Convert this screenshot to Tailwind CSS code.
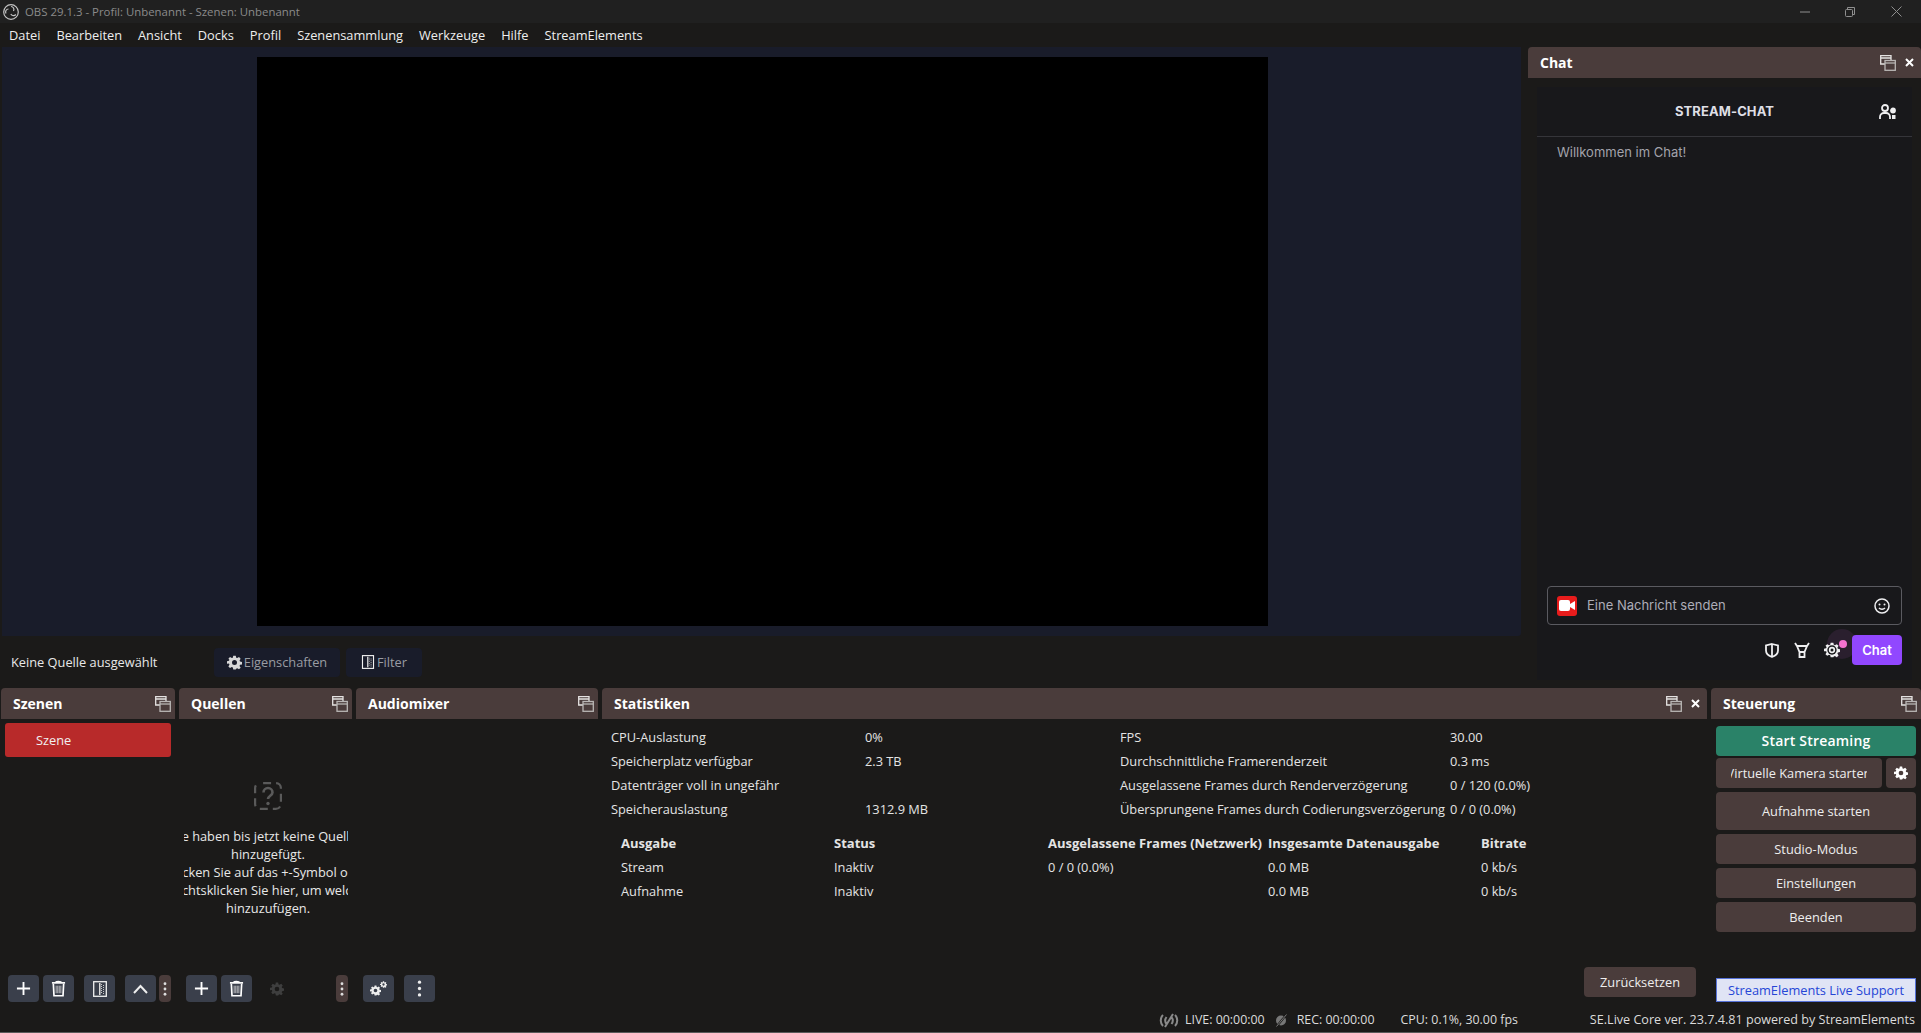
<!DOCTYPE html>
<html><head><meta charset="utf-8"><script src="https://cdn.jsdelivr.net/npm/@tailwindcss/browser@4"></script></head>
<body class="m-0 overflow-hidden bg-[#1b1a19]">
<svg width="0" height="0" class="absolute">
<defs>
<symbol id="float" viewBox="0 0 16 16"><path d="M5 9H.7V.7h10.300V5M.7 3H11" fill="none" stroke="#e4e2e1" stroke-width="1.300"/><rect x="5" y="5.500" width="10.300" height="9.800" fill="none" stroke="#b9b6b5" stroke-width="1.300"/><path d="M5 8h10.300" stroke="#b9b6b5" stroke-width="1.300"/></symbol>
<symbol id="plus" viewBox="0 0 16 16"><path d="M8 1v14M1 8h14" stroke="#fff" stroke-width="2"/></symbol>
<symbol id="trash" viewBox="0 0 16 18"><path d="M1 3h14" stroke="#fff" stroke-width="1.800"/><path d="M5 2.500C5 1 11 1 11 2.500" fill="none" stroke="#fff" stroke-width="1.400"/><path d="M2.500 4l.7 12.700h9.600l.7-12.700" fill="none" stroke="#fff" stroke-width="1.800"/><path d="M5.500 6v8M7.200 6v8M8.800 6v8M10.500 6v8" stroke="#e0e0e0" stroke-width=".8"/></symbol>
<symbol id="filter" viewBox="0 0 14 16"><rect x=".7" y=".7" width="12.600" height="14.600" fill="none" stroke="#f0f0f0" stroke-width="1.300"/><rect x="6" y="2" width="1.500" height="12" fill="#ddd"/><path d="M8 3h1v1H8zM10 4h1v1h-1zM8 5h1v1H8zM10 6h1v1h-1zM8 7h1v1H8zM10 8h1v1h-1zM8 9h1v1H8zM10 10h1v1h-1zM8 11h1v1H8zM10 12h1v1h-1z" fill="#c8c8c8"/></symbol>
<symbol id="gear" viewBox="0 0 24 24"><path fill-rule="evenodd" d="M10 1h4l.7 3.200 1.700.7L19.200 3.200l2.600 2.600-1.700 2.800.7 1.700 3.200.7v4l-3.200.7-.7 1.700 1.700 2.800-2.600 2.600-2.800-1.700-1.700.7L14 23h-4l-.7-3.200-1.700-.7-2.800 1.700-2.600-2.600 1.700-2.800-.7-1.700L0 14v-4l3.200-.7.7-1.700L2.200 5.800l2.600-2.600 2.800 1.700 1.700-.7zM12 8a4 4 0 100 8 4 4 0 000-8z"/></symbol>
<symbol id="kebab" viewBox="0 0 4 16"><circle cx="2" cy="2" r="1.600"/><circle cx="2" cy="8" r="1.600"/><circle cx="2" cy="14" r="1.600"/></symbol>
</defs>
</svg>
<div class="w-[1921px] h-[1033px] flex flex-col overflow-hidden text-[12.8px] leading-[18px] text-[#e8e8e8] font-['Open_Sans',sans-serif]">
<!-- title -->
<div class="h-[23px] shrink-0 bg-[#202020] flex items-center relative">
<svg class="ml-[3px] w-[16px] h-[16px]" viewBox="0 0 16 16" fill="none" stroke="#c4c4c4" stroke-width="1.200"><circle cx="8" cy="8" r="7.300"/><path d="M8 2.500a3 3 0 012.500 4.500M12.800 10.500a3 3 0 01-5-.5M3 9.500a3 3 0 012.500-4.500"/></svg>
<span class="ml-[6px] text-[11.4px] text-[#8b8b8b]">OBS 29.1.3 - Profil: Unbenannt - Szenen: Unbenannt</span>
<div class="ml-auto flex items-center text-[#8f8f8f] mr-[19px]">
<svg class="w-[10px] h-[10px] mr-[35px]" viewBox="0 0 10 10"><path d="M0 5h10" stroke="#8f8f8f"/></svg>
<svg class="w-[10px] h-[10px] mr-[36px]" viewBox="0 0 10 10" fill="none" stroke="#8f8f8f"><rect x=".5" y="2.500" width="7" height="7" rx="1"/><path d="M2.500 2.500V.5h7v7H7.500"/></svg>
<svg class="w-[11px] h-[11px]" viewBox="0 0 11 11"><path d="M.5.5l10 10M10.500.5l-10 10" stroke="#8f8f8f"/></svg>
</div></div>
<!-- menu -->
<div class="h-[24px] shrink-0 bg-[#1b1a19] flex items-center pl-[9px] gap-[16px] text-[#eee]">
<span>Datei</span><span>Bearbeiten</span><span>Ansicht</span><span>Docks</span><span>Profil</span><span>Szenensammlung</span><span>Werkzeuge</span><span>Hilfe</span><span>StreamElements</span>
</div>
<!-- main -->
<div class="h-[641px] shrink-0 flex">
<div class="w-[1528px] shrink-0 flex flex-col">
<div class="ml-[2px] w-[1519px] h-[589px] pl-[2px] bg-[#191c2a] flex items-center justify-center rounded-br-[3px]">
<div class="w-[1011px] h-[569px] bg-black"></div>
</div>
<div class="h-[52px] flex items-center">
<span class="ml-[11px] w-[203px]">Keine Quelle ausgewählt</span>
<div class="w-[126px] h-[29px] rounded-[4px] bg-[#191c2a] text-[#9a9ca3] flex items-center justify-center gap-[2px]"><svg class="w-[15px] h-[15px] fill-[#d8d8d8]"><use href="#gear"/></svg>Eigenschaften</div>
<div class="ml-[6px] w-[76px] h-[29px] rounded-[4px] bg-[#191c2a] text-[#9a9ca3] flex items-center justify-center gap-[2px]"><svg class="w-[14px] h-[14px]"><use href="#filter"/></svg>Filter</div>
</div>
</div>
<div class="flex-1 flex flex-col">
<div class="h-[31px] shrink-0 bg-[#4a3c3b] rounded-t-[4px] flex items-center pl-[12px] text-[14px] font-bold text-white">Chat
<svg class="ml-auto w-[16px] h-[16px]"><use href="#float"/></svg>
<svg class="ml-[9px] mr-[7px] w-[9px] h-[9px]" viewBox="0 0 9 9"><path d="M1 1l7 7M8 1l-7 7" stroke="#fff" stroke-width="2"/></svg>
</div>
<div class="mx-[9px] mt-[9px] mb-[8px] flex-1 bg-[#18181b] flex flex-col font-['Inter',sans-serif]">
<div class="h-[50px] shrink-0 border-b border-[#35353a] flex items-center relative pb-[2px]">
<span class="w-full text-center font-bold text-[13px] text-[#dfdfe6] tracking-[.1px]">STREAM-CHAT</span>
<svg class="absolute right-[16px] top-[17px] w-[17px] h-[16px]" viewBox="0 0 17 16" fill="none" stroke="#efeff1" stroke-width="1.800"><circle cx="6" cy="4" r="3"/><path d="M1 15v-2a4 4 0 014-4h2a4 4 0 014 4v2"/><circle cx="14" cy="6.500" r="2" fill="#efeff1"/><path d="M13 11h3.500v4H13z" fill="#efeff1" stroke="none"/></svg>
</div>
<div class="pl-[20px] pt-[6px] text-[13px] text-[#a3a3ab]">Willkommen im Chat!</div>
<div class="mt-auto ml-[10px] w-[355px] h-[39px] border border-[#5a5a60] rounded-[4px] flex items-center">
<div class="ml-[9px] w-[20px] h-[20px] bg-[#e81c1c] rounded-[3px] flex items-center justify-center"><svg class="w-[16px] h-[11px]" viewBox="0 0 16 11" fill="#fff"><rect width="11" height="11" rx="2"/><path d="M11 4l5-3v9l-5-3z"/></svg></div>
<span class="ml-[10px] pb-[1px] text-[13px] text-[#adadb8]">Eine Nachricht senden</span>
<svg class="ml-auto mr-[11px] w-[16px] h-[16px]" viewBox="0 0 16 16" fill="none" stroke="#efeff1" stroke-width="1.500"><circle cx="8" cy="8" r="7"/><circle cx="5.500" cy="6.500" r="1" fill="#efeff1" stroke="none"/><circle cx="10.500" cy="6.500" r="1" fill="#efeff1" stroke="none"/><path d="M5 10c1.500 1.500 4.500 1.500 6 0"/></svg>
</div>
<div class="mt-[10px] mb-[15px] ml-[10px] w-[355px] flex items-center justify-end">
<svg class="w-[14px] h-[15px] mr-[15px]" viewBox="0 0 14 15" fill="none" stroke="#efeff1" stroke-width="1.800"><path d="M7 1l6 1.500v5C13 11 10 13 7 14 4 13 1 11 1 7.500v-5z"/><path d="M7 1v13"/></svg>
<svg class="w-[16px] h-[16px] mr-[14px]" viewBox="0 0 16 16" fill="none" stroke="#efeff1" stroke-width="1.800"><path d="M1 1l2 3h10l2-3M3 4l2.500 6h5L13 4M5.500 10v5h5v-5"/></svg>
<div class="relative w-[16px] h-[16px] mr-[12px]">
<span class="absolute left-[3px] top-[-13px] w-[30px] h-[30px] rounded-full bg-[#2a1f2e]"></span>
<svg class="absolute left-0 top-0 w-[16px] h-[16px]" viewBox="0 0 24 24"><use href="#gear" width="24" height="24" fill="#efeff1"/><circle cx="12" cy="12" r="7" fill="#18181b"/><circle cx="12" cy="12" r="3.500" fill="none" stroke="#efeff1" stroke-width="2.500"/></svg>
<span class="absolute left-[15px] top-[-2px] w-[8px] h-[8px] rounded-full bg-[#f472d0]"></span>
</div>
<div class="relative z-10 w-[50px] h-[30px] rounded-[4px] bg-[#9147ff] text-white font-semibold text-[13px] flex items-center justify-center">Chat</div>
</div>
</div>
</div>
</div>
<!-- docks -->
<div class="h-[322px] shrink-0 flex gap-[4px] pl-[1px]">
<!-- scenes -->
<div class="w-[174px] flex flex-col">
<div class="h-[31px] bg-[#4a3c3b] rounded-t-[4px] flex items-center pl-[12px] text-[14px] font-bold text-white">Szenen<svg class="ml-auto mr-[4px] w-[16px] h-[16px]"><use href="#float"/></svg></div>
<div class="mt-[4px] ml-[4px] w-[166px] h-[34px] rounded-[3px] bg-[#b82a2a] text-[#f0f0f0] flex items-center pl-[31px]">Szene</div>
<div class="mt-auto mb-[8px] flex ml-[7px]">
<button class="w-[31px] h-[27px] rounded-[4px] bg-[#3a3f4b] flex items-center justify-center"><svg class="w-[15px] h-[15px]"><use href="#plus"/></svg></button>
<button class="ml-[4px] w-[31px] h-[27px] rounded-[4px] bg-[#3a3f4b] flex items-center justify-center"><svg class="w-[15px] h-[17px]"><use href="#trash"/></svg></button>
<button class="ml-[10px] w-[31px] h-[27px] rounded-[4px] bg-[#3a3f4b] flex items-center justify-center"><svg class="w-[14px] h-[16px]"><use href="#filter"/></svg></button>
<button class="ml-[10px] w-[31px] h-[27px] rounded-[4px] bg-[#3a3f4b] flex items-center justify-center"><svg class="w-[15px] h-[10px]" viewBox="0 0 15 10" fill="none" stroke="#eee" stroke-width="2"><path d="M1 9l6.500-7L14 9"/></svg></button>
<button class="ml-[3px] w-[12px] h-[27px] rounded-[4px] bg-[#4a3c3b] flex items-center justify-center"><svg class="w-[4px] h-[14px] fill-[#ddd]"><use href="#kebab"/></svg></button>
</div>
</div>
<!-- sources -->
<div class="w-[173px] flex flex-col">
<div class="h-[31px] bg-[#4a3c3b] rounded-t-[4px] flex items-center pl-[12px] text-[14px] font-bold text-white">Quellen<svg class="ml-auto mr-[4px] w-[16px] h-[16px]"><use href="#float"/></svg></div>
<div class="flex-1 flex flex-col items-center">
<svg class="mt-[63px] ml-[5px] w-[28px] h-[28px]" viewBox="0 0 28 28" fill="none" stroke="#5a5a5a" stroke-width="2.200"><rect x="1.100" y="1.100" width="25.800" height="25.800" rx="5" stroke-dasharray="8 5" stroke-dashoffset="-3"/><path d="M9.500 10.500a4.500 4.500 0 119 0c0 3-4.500 3.500-4.500 6.500" stroke-width="2.600"/><circle cx="14" cy="21.500" r="1.700" fill="#5a5a5a" stroke="none"/></svg>
<div class="mt-[17px] self-start ml-[5px] w-[164px] pl-[4px] overflow-hidden flex flex-col items-center whitespace-nowrap">
<span>Sie haben bis jetzt keine Quellen</span><span>hinzugefügt.</span><span>Klicken Sie auf das +-Symbol oder</span><span>rechtsklicken Sie hier, um welche</span><span>hinzuzufügen.</span>
</div>
<div class="mt-auto mb-[8px] flex w-full pl-[7px] items-center">
<button class="w-[31px] h-[27px] rounded-[4px] bg-[#3a3f4b] flex items-center justify-center"><svg class="w-[15px] h-[15px]"><use href="#plus"/></svg></button>
<button class="ml-[4px] w-[31px] h-[27px] rounded-[4px] bg-[#3a3f4b] flex items-center justify-center"><svg class="w-[15px] h-[17px]"><use href="#trash"/></svg></button>
<svg class="ml-[18px] w-[14px] h-[14px] fill-[#3e3e3e]" viewBox="0 0 24 24"><use href="#gear" width="24" height="24"/></svg>
<button class="ml-[52px] w-[12px] h-[27px] rounded-[4px] bg-[#4a3c3b] flex items-center justify-center"><svg class="w-[4px] h-[14px] fill-[#ddd]"><use href="#kebab"/></svg></button>
</div>
</div>
</div>
<!-- audio -->
<div class="w-[242px] flex flex-col">
<div class="h-[31px] bg-[#4a3c3b] rounded-t-[4px] flex items-center pl-[12px] text-[14px] font-bold text-white">Audiomixer<svg class="ml-auto mr-[4px] w-[16px] h-[16px]"><use href="#float"/></svg></div>
<div class="mt-auto mb-[8px] flex ml-[7px]">
<button class="w-[31px] h-[27px] rounded-[4px] bg-[#3a3f4b] flex items-center justify-center"><svg class="w-[17px] h-[15px] fill-[#eee]" viewBox="0 0 17 15"><use href="#gear" x="0" y="4" width="11" height="11"/><use href="#gear" x="10" y="0" width="7" height="7"/></svg></button>
<button class="ml-[10px] w-[31px] h-[27px] rounded-[4px] bg-[#3a3f4b] flex items-center justify-center"><svg class="w-[5px] h-[17px] fill-[#eee]" viewBox="0 0 4 16"><use href="#kebab" width="4" height="16"/></svg></button>
</div>
</div>
<!-- stats -->
<div class="w-[1105px] flex flex-col">
<div class="h-[31px] bg-[#4a3c3b] rounded-t-[4px] flex items-center pl-[12px] text-[14px] font-bold text-white">Statistiken<svg class="ml-auto w-[16px] h-[16px]"><use href="#float"/></svg><svg class="ml-[9px] mr-[7px] w-[9px] h-[9px]" viewBox="0 0 9 9"><path d="M1 1l7 7M8 1l-7 7" stroke="#fff" stroke-width="2"/></svg></div>
<div class="mt-[6px] ml-[9px] grid grid-cols-[254px_255px_330px_1fr] auto-rows-[24px] items-center text-[#e4e4e4]">
<span>CPU-Auslastung</span><span>0%</span><span>FPS</span><span>30.00</span>
<span>Speicherplatz verfügbar</span><span>2.3 TB</span><span>Durchschnittliche Framerenderzeit</span><span>0.3 ms</span>
<span>Datenträger voll in ungefähr</span><span></span><span>Ausgelassene Frames durch Renderverzögerung</span><span>0 / 120 (0.0%)</span>
<span>Speicherauslastung</span><span>1312.9 MB</span><span class="whitespace-nowrap">Übersprungene Frames durch Codierungsverzögerung</span><span>0 / 0 (0.0%)</span>
</div>
<div class="mt-[10px] ml-[19px] grid grid-cols-[213px_214px_220px_213px_1fr] auto-rows-[24px] items-center text-[#e4e4e4] whitespace-nowrap">
<span class="font-bold text-[13px]">Ausgabe</span><span class="font-bold text-[13px]">Status</span><span class="font-bold text-[13px]">Ausgelassene Frames (Netzwerk)</span><span class="font-bold text-[13px]">Insgesamte Datenausgabe</span><span class="font-bold text-[13px]">Bitrate</span>
<span>Stream</span><span>Inaktiv</span><span>0 / 0 (0.0%)</span><span>0.0 MB</span><span>0 kb/s</span>
<span>Aufnahme</span><span>Inaktiv</span><span></span><span>0.0 MB</span><span>0 kb/s</span>
</div>
<button class="mt-auto mb-[13px] ml-auto mr-[11px] w-[112px] h-[30px] rounded-[4px] bg-[#4a3c3b] text-[#eee]">Zurücksetzen</button>
</div>
<!-- controls -->
<div class="flex-1 flex flex-col">
<div class="h-[31px] bg-[#4a3c3b] rounded-t-[4px] flex items-center pl-[12px] text-[14px] font-bold text-white">Steuerung<svg class="ml-auto mr-[4px] w-[16px] h-[16px]"><use href="#float"/></svg></div>
<div class="mt-[7px] ml-[5px] w-[200px] flex flex-col text-[#eee]">
<button class="h-[30px] rounded-[4px] bg-[#2a8268] text-white font-semibold text-[14px] tracking-[.2px]">Start Streaming</button>
<div class="mt-[2px] flex gap-[4px]">
<div class="w-[166px] h-[30px] rounded-[4px] bg-[#4a3c3b] flex items-center justify-center"><div class="w-[136px] overflow-hidden flex justify-center whitespace-nowrap"><span>Virtuelle Kamera starten</span></div></div>
<button class="w-[30px] h-[30px] rounded-[4px] bg-[#4a3c3b] flex items-center justify-center"><svg class="w-[14px] h-[14px] fill-white"><use href="#gear"/></svg></button>
</div>
<button class="mt-[4px] h-[38px] rounded-[4px] bg-[#4a3c3b]">Aufnahme starten</button>
<button class="mt-[4px] h-[30px] rounded-[4px] bg-[#4a3c3b]">Studio-Modus</button>
<button class="mt-[4px] h-[30px] rounded-[4px] bg-[#4a3c3b]">Einstellungen</button>
<button class="mt-[4px] h-[30px] rounded-[4px] bg-[#4a3c3b]">Beenden</button>
</div>
<div class="mt-auto mb-[8px] ml-[5px] w-[200px] h-[24px] bg-[#e0e4f5] border border-[#5672d8] text-[#2546d6] flex items-center justify-center">StreamElements Live Support</div>
</div>
</div>
<!-- status -->
<div class="flex-1 flex items-center border-b border-[#5a5a5a] pb-[2px] text-[12.4px] text-[#dcdcdc]">
<svg class="ml-[1159px] w-[20px] h-[15px]" viewBox="0 0 20 15" fill="none" stroke="#8a8a8a" stroke-width="2"><path d="M4 2C1 5 1 10 4 13M16 2c3 3 3 8 0 11M7.500 4C6 6 6 9 7.500 11M12.500 4c1.500 2 1.500 5 0 7M14 1L6 14"/></svg>
<span class="ml-[6px]">LIVE: 00:00:00</span>
<svg class="ml-[10px] w-[12px] h-[13px]" viewBox="0 0 12 13"><circle cx="6" cy="6.500" r="5" fill="#777"/><path d="M11 1L2 12" stroke="#1b1a19" stroke-width="2"/><path d="M11.500 .5L1.500 12.500" stroke="#777" stroke-width="1"/></svg>
<span class="ml-[10px]">REC: 00:00:00</span>
<span class="ml-[26px]">CPU: 0.1%, 30.00 fps</span>
<span class="ml-auto mr-[6px] text-[12.6px]">SE.Live Core ver. 23.7.4.81 powered by StreamElements</span>
</div>
</div>
</body></html>
